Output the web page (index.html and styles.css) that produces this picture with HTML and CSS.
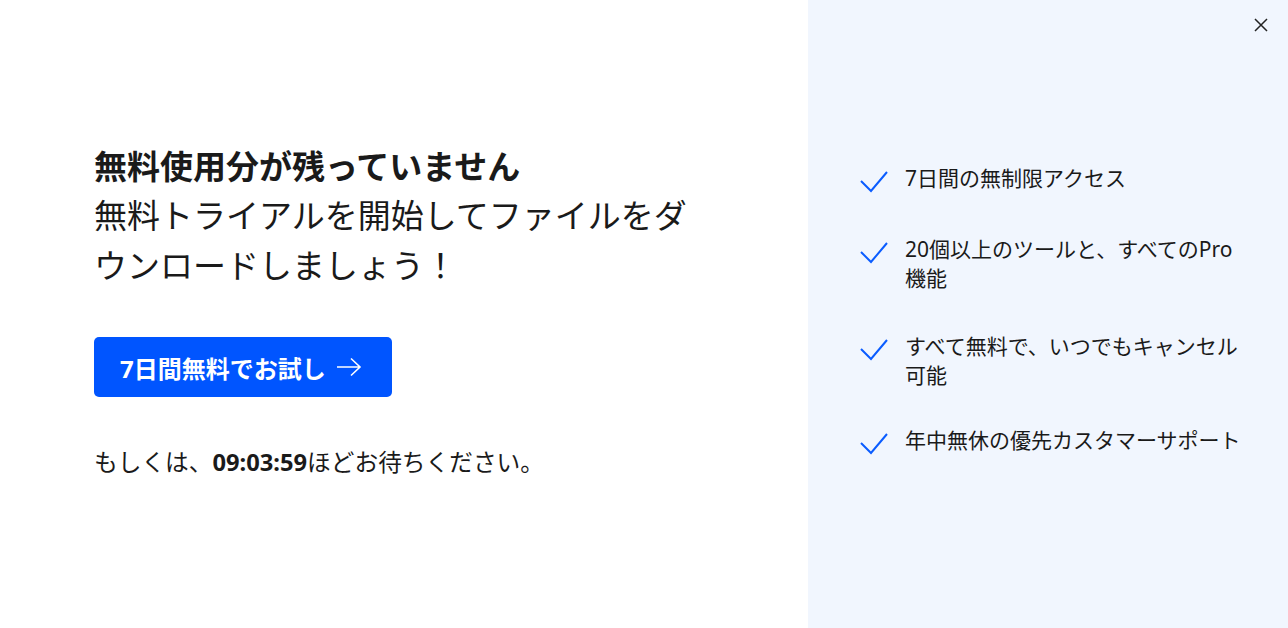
FILE: index.html
```html
<!DOCTYPE html>
<html lang="ja">
<head>
<meta charset="utf-8">
<link rel="stylesheet" href="styles.css">
</head>
<body>
<div class="modal">
  <section class="main">
    <h1 class="title">無料使用分が残っていません</h1>
    <p class="subtitle">無料トライアルを開始してファイルをダウンロードしましょう！</p>
    <button class="cta">7日間無料でお試し
      <svg class="arrow" width="26" height="20" viewBox="0 0 26 20"><path d="M1 10H24M15 1.5L24 10L15 18.5" fill="none" stroke="#fff" stroke-width="1.6"/></svg>
    </button>
    <p class="wait">もしくは、<b>09:03:59</b>ほどお待ちください。</p>
  </section>
  <aside class="side">
    <button class="close" aria-label="close"><svg width="14" height="14" viewBox="0 0 14 14"><path d="M1 1L13 13M13 1L1 13" stroke="#222" stroke-width="1.5"/></svg></button>
    <ul class="features">
      <li><svg class="check" width="28" height="22" viewBox="0 0 28 22"><path d="M1 10L11 20L27 1" fill="none" stroke="#0a5cff" stroke-width="2"/></svg><span>7日間の無制限アクセス</span></li>
      <li><svg class="check" width="28" height="22" viewBox="0 0 28 22"><path d="M1 10L11 20L27 1" fill="none" stroke="#0a5cff" stroke-width="2"/></svg><span>20個以上のツールと、すべてのPro機能</span></li>
      <li><svg class="check" width="28" height="22" viewBox="0 0 28 22"><path d="M1 10L11 20L27 1" fill="none" stroke="#0a5cff" stroke-width="2"/></svg><span>すべて無料で、いつでもキャンセル可能</span></li>
      <li><svg class="check" width="28" height="22" viewBox="0 0 28 22"><path d="M1 10L11 20L27 1" fill="none" stroke="#0a5cff" stroke-width="2"/></svg><span>年中無休の優先カスタマーサポート</span></li>
    </ul>
  </aside>
</div>
</body>
</html>
```
FILE: styles.css
```css
* { box-sizing: border-box; }
html, body { margin: 0; padding: 0; }
body {
  font-family: "Noto Sans", "Noto Sans CJK JP", sans-serif;
  color: #1a1a1a;
  background: #fff;
}
.modal {
  display: flex;
  width: 1288px;
  height: 628px;
}
.main {
  width: 808px;
  padding: 143px 0 0 94px;
}
.title {
  margin: 0;
  font-size: 33px;
  font-weight: 700;
  line-height: 48px;
}
.subtitle {
  margin: 0;
  width: 600px;
  font-size: 33px;
  font-weight: 400;
  line-height: 50px;
}
.cta {
  margin-top: 46px;
  display: flex;
  align-items: center;
  gap: 10px;
  height: 60px;
  width: 298px;
  padding: 0 0 0 26px;
  border: none;
  border-radius: 5px;
  background: #0055ff;
  color: #fff;
  font-family: inherit;
  font-size: 24px;
  font-weight: 700;
}
.wait {
  margin: 50px 0 0;
  font-size: 23.7px;
  line-height: 30px;
}
.wait b { font-weight: 700; }
.side {
  position: relative;
  flex: 1;
  background: #f1f6fe;
  padding: 164px 30px 0 52px;
}
.close {
  position: absolute;
  top: 18px;
  right: 20px;
  border: none;
  background: none;
  padding: 0;
  width: 14px;
  height: 14px;
}
.features {
  list-style: none;
  margin: 0;
  padding: 0;
  display: flex;
  flex-direction: column;
}
.features li {
  display: flex;
  align-items: flex-start;
  gap: 17px;
  font-size: 21px;
  line-height: 29px;
}
.features li:nth-child(2) { margin-top: 42px; }
.features li:nth-child(3) { margin-top: 39px; }
.features li:nth-child(4) { margin-top: 36px; }
.check { flex: none; margin-top: 7px; }
.features span { width: 345px; }
```
